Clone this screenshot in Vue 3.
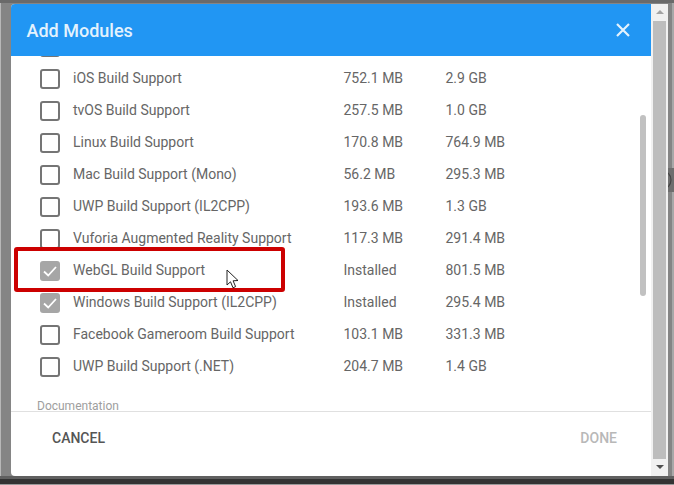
<script setup>
const rows = [
  { name: 'iOS Build Support', size: '752.1 MB', disk: '2.9 GB' },
  { name: 'tvOS Build Support', size: '257.5 MB', disk: '1.0 GB' },
  { name: 'Linux Build Support', size: '170.8 MB', disk: '764.9 MB' },
  { name: 'Mac Build Support (Mono)', size: '56.2 MB', disk: '295.3 MB' },
  { name: 'UWP Build Support (IL2CPP)', size: '193.6 MB', disk: '1.3 GB' },
  { name: 'Vuforia Augmented Reality Support', size: '117.3 MB', disk: '291.4 MB' },
  { name: 'WebGL Build Support', size: 'Installed', disk: '801.5 MB', checked: true },
  { name: 'Windows Build Support (IL2CPP)', size: 'Installed', disk: '295.4 MB', checked: true },
  { name: 'Facebook Gameroom Build Support', size: '103.1 MB', disk: '331.3 MB' },
  { name: 'UWP Build Support (.NET)', size: '204.7 MB', disk: '1.4 GB' },
]
</script>

<template>
  <div class="page">
    <div class="dialog">
      <header class="head">
        <h1>Add Modules</h1>
        <svg class="close" width="16" height="16" viewBox="0 0 16 16">
          <path d="M2 2 L14 14 M14 2 L2 14" stroke="#e3f2fd" stroke-width="2.2" fill="none" />
        </svg>
      </header>
      <div class="body">
        <div class="list">
          <div class="peek"><span class="box"></span></div>
          <div v-for="r in rows" :key="r.name" class="row">
            <span class="box" :class="{ on: r.checked }">
              <svg v-if="r.checked" width="20" height="20" viewBox="0 0 20 20">
                <path d="M4 10.5 L8.2 14.5 L16 6" stroke="#fff" stroke-width="1.8" fill="none" />
              </svg>
            </span>
            <span class="name">{{ r.name }}</span>
            <span class="size">{{ r.size }}</span>
            <span class="disk">{{ r.disk }}</span>
          </div>
        </div>
        <div class="doc">Documentation</div>
        <div class="thumb"></div>
      </div>
      <footer class="foot">
        <span class="cancel">CANCEL</span>
        <span class="done">DONE</span>
      </footer>
    </div>
    <div class="bar">
      <div class="arrow up"></div>
      <div class="track"></div>
      <div class="arrow down"></div>
    </div>
    <svg class="peek-edge" width="6" height="24" viewBox="0 0 6 24">
      <rect width="6" height="24" fill="#6e6e6e" />
      <path d="M0 5 C4 9 4 15 0 19" stroke="#444" stroke-width="1.2" fill="none" />
    </svg>
    <div class="mark"></div>
    <svg class="cursor" width="14" height="21" viewBox="0 0 14 21">
      <path d="M1 1 L1 16 L4.5 12.8 L7 18.8 L9.6 17.6 L7.1 11.8 L12 11.5 Z" fill="#fff" stroke="#222" stroke-width="1" />
    </svg>
  </div>
</template>

<style scoped>
.page {
  position: relative;
  width: 674px;
  height: 485px;
  box-sizing: border-box;
  padding: 4px 6px 9px 11px;
  display: flex;
  overflow: hidden;
  background:
    linear-gradient(to right, #b8b8b8 1px, transparent 1px) 0 3px / 100% 473px no-repeat,
    linear-gradient(to left, #a8a8a8 2px, transparent 2px) 0 3px / 100% 473px no-repeat,
    linear-gradient(#6a6a6a 0, #6a6a6a 3px, #858585 3px, #858585 476px, #606060 476px, #606060 479px, #333 479px, #333 484px, #9a9a9a 484px);
  font-family: Roboto, "Liberation Sans", sans-serif;
}
.dialog {
  width: 640px;
  display: flex;
  flex-direction: column;
  background: #fff;
  border-radius: 4px 0 0 4px;
  overflow: hidden;
}
.head {
  height: 52px;
  flex: none;
  display: flex;
  align-items: center;
  justify-content: space-between;
  padding: 0 20px 0 15.5px;
  background: #2196f3;
}
.head h1 {
  margin: 0;
  font-size: 18px;
  font-weight: 500;
  color: #e3f2fd;
}
.body {
  position: relative;
  height: 355px;
  flex: none;
}
.list {
  height: 326px;
  padding-left: 29px;
  overflow: hidden;
}
.peek {
  height: 12px;
  margin-top: -6px;
  display: flex;
  align-items: flex-end;
}
.peek .box { margin-bottom: 5px; }
.row {
  height: 32px;
  display: flex;
  align-items: center;
  font-size: 14px;
  color: #666;
}
.box {
  width: 20px;
  height: 20px;
  flex: none;
  box-sizing: border-box;
  border: 2px solid #757575;
  border-radius: 3px;
  background: #fff;
}
.row .box { margin-top: 2px; }
.box.on {
  border: 0;
  background: #a6a6a6;
}
.name { width: 270.5px; margin-left: 13px; white-space: nowrap; }
.size { width: 102px; }
.doc {
  margin: 19px 0 0 26px;
  font-size: 12px;
  line-height: 10px;
  color: #9e9e9e;
}
.thumb {
  position: absolute;
  left: 629px;
  top: 59px;
  width: 6px;
  height: 181px;
  border-radius: 3px;
  background: #c1c1c1;
}
.foot {
  flex: 1;
  display: flex;
  align-items: center;
  justify-content: space-between;
  padding: 0 34px 13px 41px;
  border-top: 1px solid #e0e0e0;
  font-size: 14px;
  font-weight: 500;
}
.cancel { color: #555; }
.done { color: #b8b8b8; }
.bar {
  width: 17px;
  display: flex;
  flex-direction: column;
  background: #f1f1f1;
}
.track {
  flex: 1;
  margin: 0 2px;
  background: #bdbdbd;
}
.arrow {
  height: 17px;
  position: relative;
}
.arrow::after {
  content: "";
  position: absolute;
  left: 5px;
  border-left: 4px solid transparent;
  border-right: 4px solid transparent;
}
.up::after { top: 6px; border-bottom: 4px solid #a3a3a3; }
.down::after { top: 6px; border-top: 4px solid #505050; }
.peek-edge {
  position: absolute;
  right: 0;
  top: 168px;
}
.mark {
  position: absolute;
  left: 14px;
  top: 247px;
  width: 271px;
  height: 45px;
  box-sizing: border-box;
  border: 4px solid #cc0000;
  border-radius: 3px;
}
.cursor {
  position: absolute;
  left: 226px;
  top: 269px;
}
</style>
